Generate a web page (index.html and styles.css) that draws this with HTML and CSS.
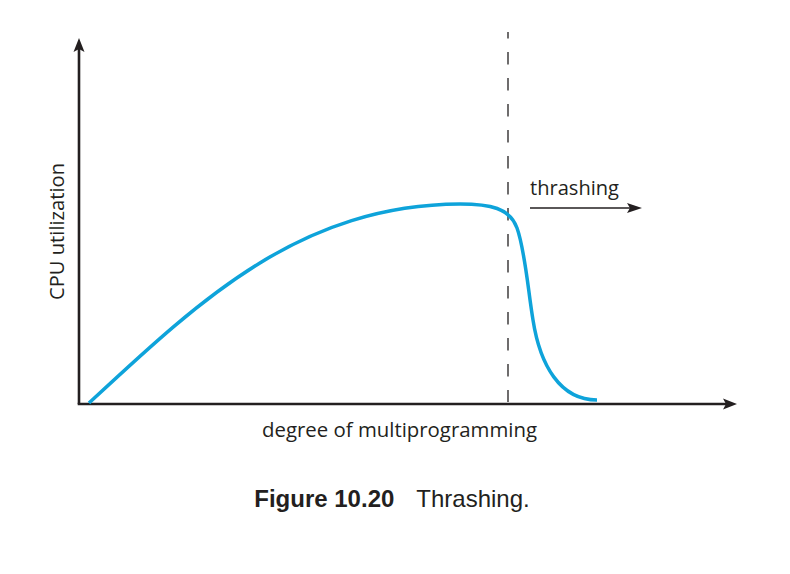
FILE: index.html
```html
<!DOCTYPE html>
<html lang="en">
<head>
<meta charset="utf-8">
<title>Figure 10.20 Thrashing</title>
<link rel="stylesheet" href="styles.css">
</head>
<body>
<figure class="figure">
  <svg class="chart" width="790" height="485" viewBox="0 0 790 485" xmlns="http://www.w3.org/2000/svg">
    <!-- axes -->
    <line class="axis" x1="79" y1="404" x2="79" y2="48"/>
    <polygon class="head" points="79,38 84.5,52 79,49 73.5,52"/>
    <line class="axis" x1="77.7" y1="404" x2="728" y2="404"/>
    <polygon class="head" points="737,404 723,398.5 726,404 723,409.5"/>
    <!-- dashed threshold -->
    <line class="dash" x1="508" y1="32" x2="508" y2="402"/>
    <!-- thrashing arrow -->
    <line class="thin" x1="530" y1="208" x2="631" y2="208"/>
    <polygon class="head" points="642,208 627,203 630,208 627,213"/>
    <!-- curve -->
    <path class="curve" d="M89,403 C200,300 300,205 460,204 C490,204 510,208 517,228 C525,250 528,290 533,320 C540,365 560,400 597,400"/>
    <!-- labels -->
    <text class="label" x="530" y="195" textLength="89" lengthAdjust="spacingAndGlyphs">thrashing</text>
    <text class="label" x="262" y="437" textLength="275" lengthAdjust="spacingAndGlyphs">degree of multiprogramming</text>
    <text class="label" transform="translate(64,300) rotate(-90)" textLength="137" lengthAdjust="spacingAndGlyphs">CPU utilization</text>
  </svg>
  <figcaption class="caption">
    <span class="caption-num">Figure 10.20</span>
    <span class="caption-title">Thrashing.</span>
  </figcaption>
</figure>
</body>
</html>
```

FILE: styles.css
```css
html, body {
  margin: 0;
  padding: 0;
  background: #ffffff;
}

.figure {
  margin: 0;
  width: 790px;
  height: 574px;
  display: flex;
  flex-direction: column;
}

.chart {
  display: block;
}

.axis {
  stroke: #231f20;
  stroke-width: 2.6;
  fill: none;
}

.head {
  fill: #231f20;
}

.dash {
  stroke: #231f20;
  stroke-width: 1.3;
  stroke-dasharray: 12.5 13.5;
  stroke-dashoffset: 6;
}

.thin {
  stroke: #231f20;
  stroke-width: 1.6;
}

.curve {
  fill: none;
  stroke: #0ea3da;
  stroke-width: 3.5;
  stroke-linecap: butt;
}

.label {
  font-family: "Open Sans", "DejaVu Sans", sans-serif;
  font-size: 20.5px;
  fill: #231f20;
}

.caption {
  display: flex;
  justify-content: center;
  gap: 22px;
  padding-right: 6px;
  font-family: "Liberation Sans", Arial, sans-serif;
  font-size: 24px;
  line-height: 28px;
  color: #231f20;
}

.caption-num {
  font-weight: bold;
}
```
